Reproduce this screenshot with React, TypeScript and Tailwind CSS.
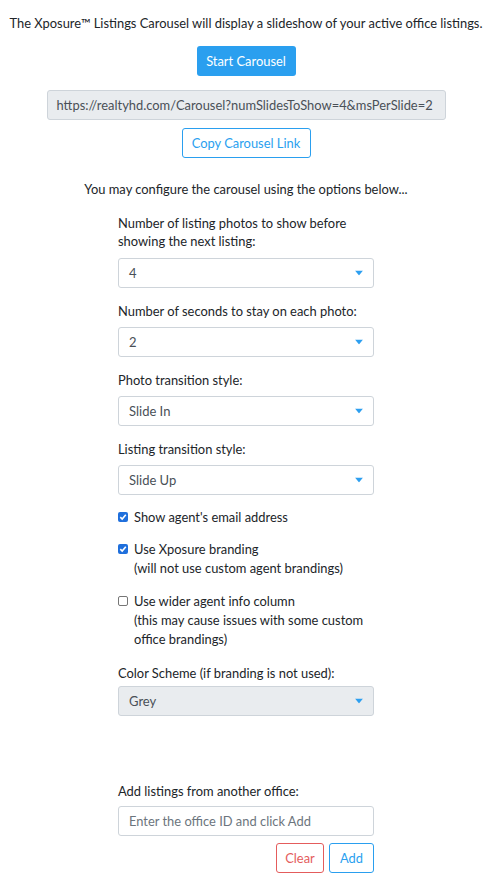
const font = { fontFamily: '"Segoe UI", Lato, "Noto Sans", sans-serif' }

function Caret() {
  return (
    <svg width="8" height="5" viewBox="0 0 8 5" className="absolute right-[10px] top-1/2 -translate-y-1/2">
      <path d="M0 0 L8 0 L4 5 Z" fill="#2d9ff0" />
    </svg>
  )
}

function Select({ value, disabled }: { value: string; disabled?: boolean }) {
  return (
    <div
      className={`relative h-[30px] w-full rounded-[3px] border border-[#ced4da] pl-[10px] text-[13px] leading-[28px] text-[#495057] ${
        disabled ? "bg-[#e9ecef]" : "bg-white"
      }`}
    >
      {value}
      <Caret />
    </div>
  )
}

function Check({ checked }: { checked: boolean }) {
  return checked ? (
    <span className="mt-[4px] flex h-[10px] w-[10px] shrink-0 items-center justify-center rounded-[2px] bg-[#1f6fdc]">
      <svg width="8" height="8" viewBox="0 0 8 8">
        <path d="M1.3 4.2 L3.2 6 L6.8 1.8" stroke="white" strokeWidth="1.6" fill="none" />
      </svg>
    </span>
  ) : (
    <span className="mt-[4px] h-[10px] w-[10px] shrink-0 rounded-[2px] border border-[#767676] bg-white" />
  )
}

export default function App() {
  return (
    <main style={font} className="flex min-h-screen flex-col items-center bg-white text-[12.9px] leading-[19px] text-[#212529]">
      <p className="mt-[14px] text-center">
        The Xposure™ Listings Carousel will display a slideshow of your active office listings.
      </p>
      <button className="mt-[13px] h-[30px] w-[99px] rounded-[3px] bg-[#2a9fef] text-white">Start Carousel</button>
      <div className="mt-[14px] h-[30px] w-[399px] rounded-[3px] border border-[#ced4da] bg-[#e9ecef] pl-[9px] leading-[28px] text-[#495057]">
        https://realtyhd.com/Carousel?numSlidesToShow=4&amp;msPerSlide=2
      </div>
      <button className="mt-[8px] h-[30px] w-[129px] rounded-[3px] border border-[#2a9fef] bg-white text-[#2a9fef]">
        Copy Carousel Link
      </button>
      <p className="mt-[22px]">You may configure the carousel using the options below...</p>

      <div className="mt-[15px] flex w-[256px] flex-col">
        <label className="leading-[18px]">Number of listing photos to show before showing the next listing:</label>
        <div className="mt-[8px]">
          <Select value="4" />
        </div>

        <label className="mt-[14px]">Number of seconds to stay on each photo:</label>
        <div className="mt-[6px]">
          <Select value="2" />
        </div>

        <label className="mt-[14px]">Photo transition style:</label>
        <div className="mt-[6px]">
          <Select value="Slide In" />
        </div>

        <label className="mt-[14px]">Listing transition style:</label>
        <div className="mt-[6px]">
          <Select value="Slide Up" />
        </div>

        <div className="mt-[13px] flex gap-[6px]">
          <Check checked />
          <span>Show agent's email address</span>
        </div>
        <div className="mt-[13px] flex gap-[6px]">
          <Check checked />
          <span>
            Use Xposure branding
            <br />
            (will not use custom agent brandings)
          </span>
        </div>
        <div className="mt-[14px] flex gap-[6px]">
          <Check checked={false} />
          <span>
            Use wider agent info column
            <br />
            (this may cause issues with some custom office brandings)
          </span>
        </div>

        <label className="mt-[15px]">Color Scheme (if branding is not used):</label>
        <div className="mt-[3px]">
          <Select value="Grey" disabled />
        </div>

        <label className="mt-[66px]">Add listings from another office:</label>
        <div className="mt-[5px] h-[30px] w-full rounded-[3px] border border-[#ced4da] bg-white pl-[10px] leading-[28px] text-[#6c757d]">
          Enter the office ID and click Add
        </div>
        <div className="mt-[7px] flex justify-end gap-[5px]">
          <button className="h-[30px] w-[48px] rounded-[3px] border border-[#e45c5c] bg-white text-[#e45c5c]">Clear</button>
          <button className="h-[30px] w-[45px] rounded-[3px] border border-[#2a9fef] bg-white text-[#2a9fef]">Add</button>
        </div>
      </div>
    </main>
  )
}
